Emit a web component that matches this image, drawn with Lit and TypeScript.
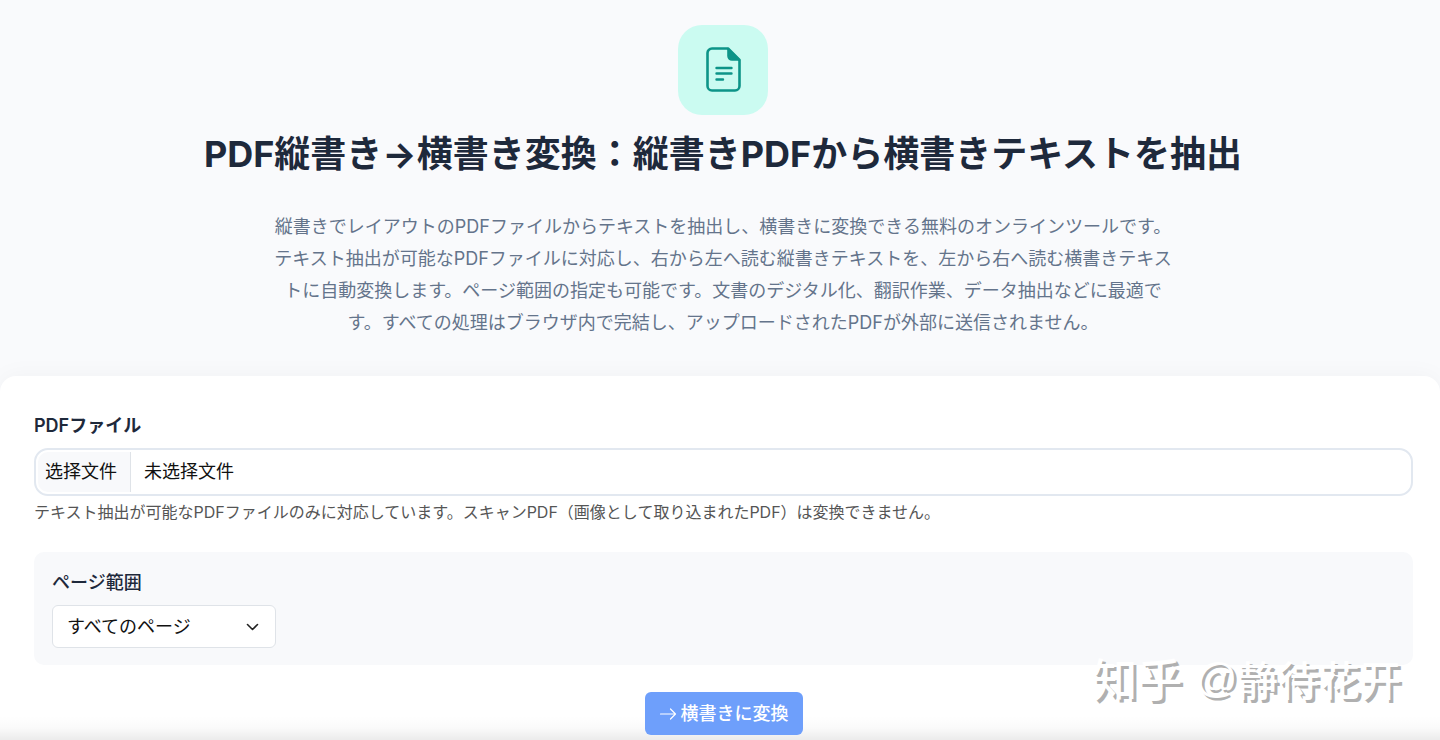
import { LitElement, html, css } from "lit";
import { customElement, state } from "lit/decorators.js";

@customElement("app-root")
export class AppRoot extends LitElement {
  static styles = css`
    :host {
      display: block;
      min-height: 100vh;
      background: #f9fafc;
      color: #1e293b;
      font-family: Inter, "Noto Sans CJK JP", sans-serif;
      font-size: 18px;
      line-height: 24px;
      overflow: hidden;
    }
    * {
      box-sizing: border-box;
    }
    .page {
      position: relative;
      min-height: 100vh;
      display: flex;
      flex-direction: column;
    }
    .hero {
      display: flex;
      flex-direction: column;
      align-items: center;
      padding: 25px 24px 37px 30px;
      text-align: center;
    }
    .badge {
      display: grid;
      place-items: center;
      width: 90px;
      height: 90px;
      border-radius: 24px;
      background: #cbfbf1;
    }
    .badge svg {
      display: block;
    }
    h1 {
      margin: 15px 0 33px;
      font-size: 36px;
      line-height: 48px;
      font-weight: 700;
    }
    .lead {
      margin: 0;
      max-width: 900px;
      line-height: 32px;
      color: #64748b;
    }
    .card {
      flex: 1;
      padding: 38px 27px 4px 34px;
      border-radius: 16px 16px 0 0;
      background: #fff;
      box-shadow: 0 0 24px rgba(0, 0, 0, 0.04);
    }
    .label {
      display: block;
      font-weight: 600;
      line-height: 24px;
    }
    .picker {
      position: relative;
      display: flex;
      align-items: stretch;
      height: 48px;
      margin-top: 10px;
      padding: 2px;
      border: 2px solid #e2e8f0;
      border-radius: 14px;
      background: #fff;
      color: #111;
      font-family: Inter, "Noto Sans CJK SC", sans-serif;
    }
    .picker-button {
      display: flex;
      align-items: center;
      padding: 0 13px 0 7px;
      border-right: 1px solid #dfe3e8;
      border-radius: 10px 0 0 10px;
      background: #f8f9fb;
    }
    .picker-name {
      display: flex;
      align-items: center;
      padding-left: 13px;
    }
    .picker input {
      position: absolute;
      inset: 0;
      width: 100%;
      opacity: 0;
      cursor: pointer;
    }
    .help {
      margin: 4px 0 0;
      font-size: 16px;
      color: #555;
    }
    .range {
      display: flex;
      flex-direction: column;
      align-items: flex-start;
      gap: 10px;
      margin-top: 28px;
      padding: 19px 18px 17px;
      border-radius: 10px;
      background: #f8f9fb;
    }
    .range-label {
      font-weight: 500;
    }
    .select {
      display: grid;
      align-items: center;
      width: 224px;
    }
    .select > * {
      grid-area: 1 / 1;
    }
    .select select {
      appearance: none;
      width: 100%;
      height: 43px;
      padding: 0 40px 0 14px;
      border: 1px solid #dfe3e8;
      border-radius: 6px;
      background: #fff;
      color: #111;
      font: inherit;
    }
    .select svg {
      justify-self: end;
      margin-right: 16px;
      pointer-events: none;
    }
    .actions {
      display: flex;
      justify-content: center;
      padding-top: 27px;
    }
    .convert {
      position: relative;
      z-index: 1;
      display: flex;
      align-items: center;
      gap: 4px;
      height: 43px;
      padding: 0 14px;
      border: 0;
      border-radius: 6px;
      background: #6e9ffb;
      color: #fff;
      font: inherit;
      font-weight: 500;
    }
    .fade {
      position: absolute;
      inset: auto 0 0;
      height: 24px;
      background: linear-gradient(rgba(0, 0, 0, 0), rgba(0, 0, 0, 0.02) 50%, rgba(0, 0, 0, 0.08));
      pointer-events: none;
    }
    .watermark {
      position: absolute;
      right: 39px;
      bottom: 32px;
      display: flex;
      align-items: center;
      font-family: "Noto Sans CJK SC", sans-serif;
      font-size: 41px;
      line-height: 60px;
      font-weight: 500;
      color: #fff;
      text-shadow: 3px 3px 0 #b0b0b0;
      pointer-events: none;
    }
    .watermark-site {
      margin-right: 13px;
      font-size: 45px;
    }
    .watermark-at {
      font-family: "Liberation Sans", sans-serif;
      font-weight: 400;
    }
  `;

  @state() private fileName = "未选择文件";

  private onFile(e: Event) {
    const file = (e.target as HTMLInputElement).files?.[0];
    this.fileName = file ? file.name : "未选择文件";
  }

  render() {
    return html`
      <main class="page">
        <header class="hero">
          <div class="badge">
            <svg width="36" height="46" viewBox="0 0 36 46" fill="none" stroke="#0d9488" stroke-linecap="round" stroke-linejoin="round" aria-hidden="true">
              <path d="M23 1.500H7A4.500 4.500 0 0 0 2.500 6v33A4.500 4.500 0 0 0 7 43.500h23A4.500 4.500 0 0 0 34.500 39V13Z" stroke-width="2.600" />
              <path d="M23 1.500V9a4 4 0 0 0 4 4H34.500Z" fill="#0d9488" stroke-width="1.600" />
              <path d="M11.500 21H26.500M11.500 26.500H26.500M11.500 32.500h6.500" stroke-width="2.400" />
            </svg>
          </div>
          <h1>PDF縦書き→横書き変換：縦書きPDFから横書きテキストを抽出</h1>
          <p class="lead">
            縦書きでレイアウトのPDFファイルからテキストを抽出し、横書きに変換できる無料のオンラインツールです。テキスト抽出が可能なPDFファイルに対応し、右から左へ読む縦書きテキストを、左から右へ読む横書きテキストに自動変換します。ページ範囲の指定も可能です。文書のデジタル化、翻訳作業、データ抽出などに最適です。すべての処理はブラウザ内で完結し、アップロードされたPDFが外部に送信されません。
          </p>
        </header>
        <section class="card">
          <label class="label" for="pdf">PDFファイル</label>
          <div class="picker">
            <span class="picker-button">选择文件</span>
            <span class="picker-name">${this.fileName}</span>
            <input id="pdf" type="file" accept="application/pdf" @change=${this.onFile} />
          </div>
          <p class="help">テキスト抽出が可能なPDFファイルのみに対応しています。スキャンPDF（画像として取り込まれたPDF）は変換できません。</p>
          <div class="range">
            <label class="range-label" for="range">ページ範囲</label>
            <div class="select">
              <select id="range">
                <option>すべてのページ</option>
              </select>
              <svg width="14" height="14" viewBox="0 0 14 14" fill="none" stroke="#222" stroke-width="1.600" stroke-linecap="round" stroke-linejoin="round" aria-hidden="true">
                <path d="M1.500 4.500l5 5 5-5" />
              </svg>
            </div>
          </div>
          <div class="actions">
            <button class="convert" type="button">
              <svg width="18" height="18" viewBox="0 0 18 18" fill="none" stroke="currentColor" stroke-width="1.200" stroke-linecap="round" stroke-linejoin="round" aria-hidden="true">
                <path d="M1.500 9h15M11.500 4l5 5-5 5" />
              </svg>
              横書きに変換
            </button>
          </div>
        </section>
        <div class="fade"></div>
        <div class="watermark">
          <span class="watermark-site">知乎</span><span class="watermark-at">@</span><span>静待花开</span>
        </div>
      </main>
    `;
  }
}
